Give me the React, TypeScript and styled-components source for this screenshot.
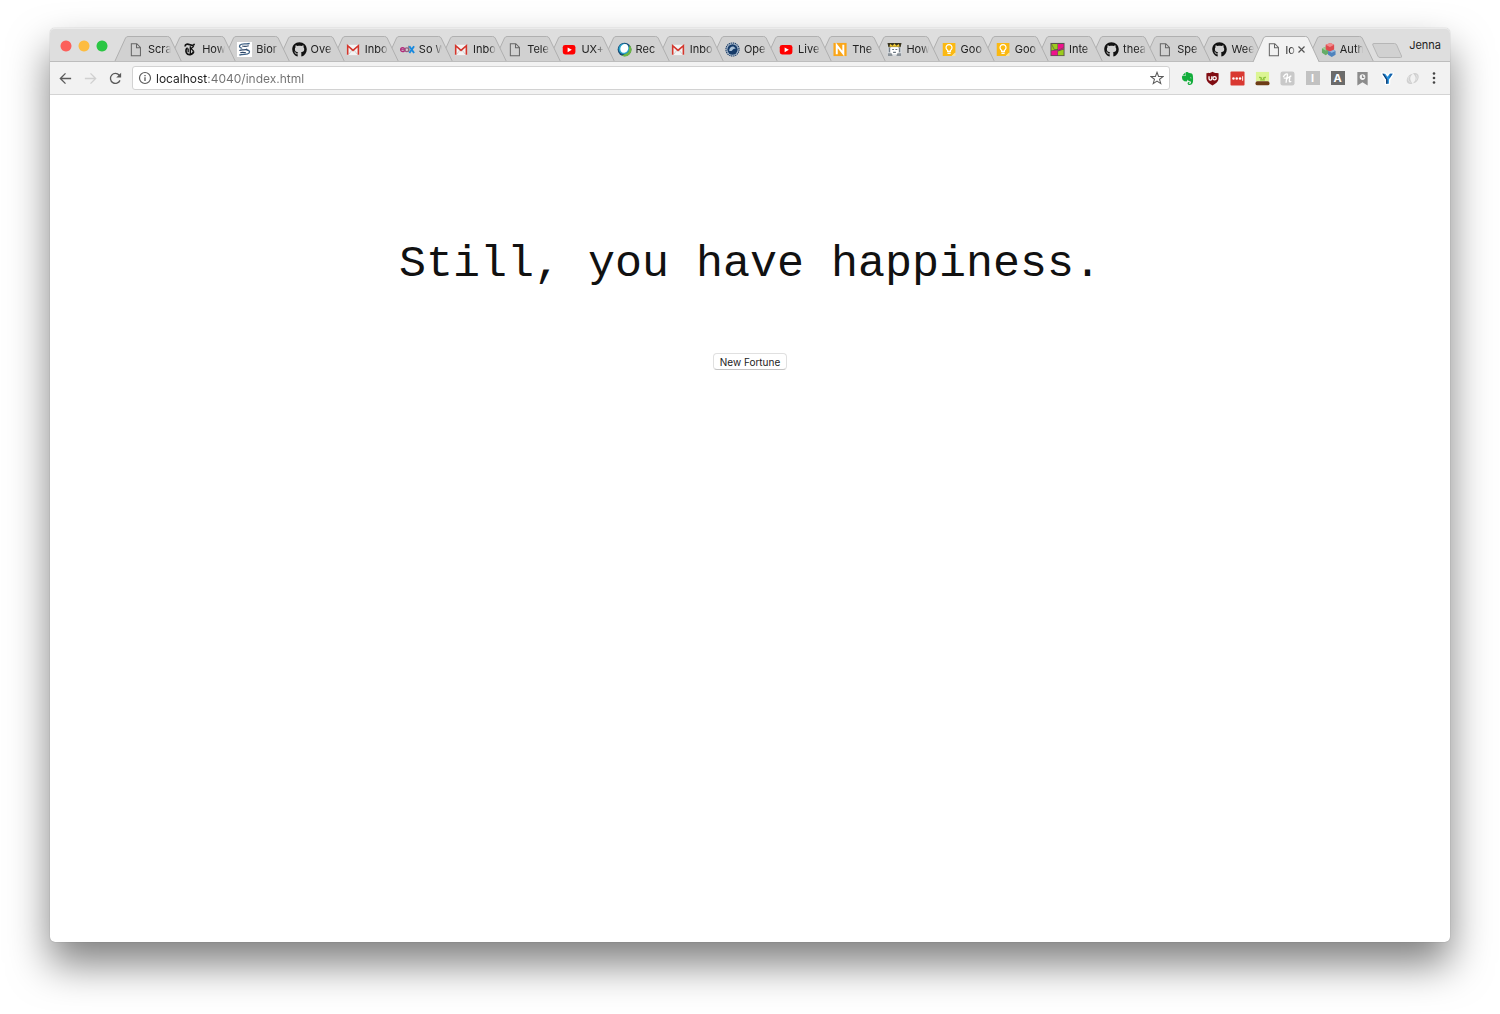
import React, { useState } from "react";
import styled, { createGlobalStyle } from "styled-components";
import { FaEvernote, FaGithub } from "react-icons/fa";

const GlobalStyle = createGlobalStyle`
  *, *::before, *::after { box-sizing: border-box; }
  body {
    margin: 0;
    background: #fff;
    font-family: Inter, "Liberation Sans", sans-serif;
    color: #222;
  }
  button { font: inherit; color: inherit; }
`;

const Desktop = styled.div`
  display: flex;
  min-height: 100vh;
  padding: 28px 50px 72px;
  overflow: hidden;
`;

const Window = styled.div`
  flex: 1;
  min-width: 0;
  display: flex;
  flex-direction: column;
  background: #fff;
  border-radius: 5px;
  box-shadow: 0 0 1px rgba(0, 0, 0, 0.4), 0 22px 40px rgba(0, 0, 0, 0.5);
`;

const TabStrip = styled.header`
  display: flex;
  height: 34px;
  padding-left: 10px;
  background: #dedede;
  border-top: 1px solid #ebebeb;
  border-bottom: 1px solid #bdbdbd;
  border-radius: 5px 5px 0 0;
`;

const Lights = styled.div`
  display: flex;
  gap: 6px;
  padding-top: 11px;
  margin-right: 7px;
`;

const Light = styled.button<{ $fill: string }>`
  width: 12px;
  height: 12px;
  padding: 0;
  border: 0;
  border-radius: 50%;
  background: radial-gradient(circle, ${(p) => p.$fill} 5px, transparent 6px);
`;

const Tabs = styled.nav`
  flex: 1;
  min-width: 0;
  display: flex;
  align-items: flex-end;
  padding-right: 12px;
  isolation: isolate;
`;

const TabButton = styled.button<{ $level: number; $active: boolean }>`
  flex: 1 1 0;
  min-width: 0;
  height: ${(p) => (p.$active ? 26 : 25)}px;
  margin: 0 -12px ${(p) => (p.$active ? -1 : 0)}px 0;
  padding: 1px 0 0;
  border: 0;
  background: none;
  position: relative;
  z-index: ${(p) => p.$level};
  text-align: left;
`;

const TabShape = styled.svg<{ $active: boolean }>`
  position: absolute;
  inset: 0;
  width: 100%;
  height: 100%;
  overflow: visible;
  fill: ${(p) => (p.$active ? "#f2f2f2" : "#d1d1d1")};
  stroke: #b0b0b0;
`;

const TabContent = styled.span<{ $active: boolean }>`
  position: relative;
  display: flex;
  align-items: center;
  gap: 4px;
  padding: 0 ${(p) => (p.$active ? 12 : 8)}px 0 14px;
`;

const TabTitle = styled.span<{ $active: boolean }>`
  flex: 1;
  min-width: 0;
  overflow: hidden;
  white-space: nowrap;
  font-size: 11px;
  line-height: 16px;
  mask-image: ${(p) =>
    p.$active
      ? "linear-gradient(to right, #000 4px, transparent 11px)"
      : "linear-gradient(to right, #000 16px, transparent 23px)"};
`;

const TabClose = styled.svg`
  flex: none;
  width: 11px;
  height: 11px;
  margin-left: -4px;
  fill: none;
  stroke: #555;
  stroke-width: 1.2;
`;

const NewTab = styled.button`
  width: 30px;
  height: 15px;
  margin-top: 14px;
  margin-left: -1px;
  padding: 0;
  border: 0;
  background: none;
`;

const Profile = styled.button`
  align-self: flex-start;
  margin-top: 7px;
  padding: 0 9px 0 7px;
  border: 0;
  background: none;
  font-size: 11px;
  line-height: 18px;
`;

const Glyph = styled.svg<{ $size?: number }>`
  flex: none;
  display: block;
  width: ${(p) => p.$size ?? 15}px;
  height: ${(p) => p.$size ?? 15}px;
`;

const Toolbar = styled.div`
  display: flex;
  align-items: center;
  height: 33px;
  padding: 0 7px 0 3px;
  background: #f2f2f2;
  border-bottom: 1px solid #d4d4d4;
`;

const ToolButton = styled.button<{ $width?: number }>`
  flex: none;
  display: flex;
  align-items: center;
  justify-content: center;
  width: ${(p) => p.$width ?? 25}px;
  height: 24px;
  padding: 0;
  border: 0;
  background: none;
`;

const AddressBox = styled.form`
  flex: 1;
  min-width: 0;
  display: flex;
  align-items: center;
  height: 24px;
  margin: 0 5px 0 4px;
  padding-left: 5px;
  background: #fff;
  border: 1px solid #d2d2d2;
  border-radius: 3px;
`;

const Address = styled.input`
  flex: 1;
  min-width: 0;
  height: 20px;
  margin-left: 4px;
  padding: 0;
  border: 0;
  outline: 0;
  font-family: Inter, "Liberation Sans", sans-serif;
  font-size: 12px;
  color: transparent;
  caret-color: #222;
  background: linear-gradient(to right, #1c1c1c 52px, #707070 52px);
  background-clip: text;
  -webkit-background-clip: text;
`;

const Square = styled.span<{ $bg: string }>`
  display: flex;
  align-items: center;
  justify-content: center;
  width: 14px;
  height: 14px;
  background: ${(p) => p.$bg};
  color: #fff;
  font-size: 11px;
  line-height: 14px;
  font-weight: 700;
`;

const Page = styled.main`
  flex: 1;
  display: flex;
  flex-direction: column;
  align-items: center;
  padding: 143px 24px 24px;
`;

const Fortune = styled.h1`
  margin: 0 0 61px;
  font-family: "Liberation Mono", "Courier New", monospace;
  font-size: 45px;
  line-height: 54px;
  font-weight: 400;
  color: #111;
  text-align: center;
`;

const FortuneButton = styled.button`
  height: 17px;
  padding: 0 6px;
  background: #fff;
  border: 1px solid #e0e0e0;
  border-bottom-color: #c4c4c4;
  border-radius: 4px;
  font-size: 10px;
  line-height: 14px;
`;

type Kind =
  | "file" | "times" | "bio" | "github" | "gmail" | "edx" | "youtube" | "ring"
  | "seal" | "letterN" | "king" | "keep" | "quad" | "cubes";

function Favicon({ kind }: { kind: Kind }) {
  if (kind === "github") {
    return <Glyph as={FaGithub} viewBox="0 0 496 512" color="#111" />;
  }
  return (
    <Glyph viewBox="0 0 16 16" aria-hidden="true">
      {kind === "file" && (
        <path d="M2.500 1.800h5.800l3.900 4v8.900H2.500zM8 2v4.100h4" fill="none" stroke="#666" strokeWidth="1.100" />
      )}
      {kind === "times" && (
        <g fill="none" stroke="#111">
          <path d="M2.500 4.800c-.5-3 2.500-2.800 5-1.800 2.500 1 4.500.5 4.500-1.200" strokeWidth="1.800" />
          <path d="M5 6.500c-2 .5-2.300 3-1.300 5 1.500 3 6.500 2.600 7.800-1.500" strokeWidth="1.800" />
          <path d="M7.800 4.500v9M5.500 7v4M11.500 4.500 8.500 7l3 3" strokeWidth="1.400" />
        </g>
      )}
      {kind === "bio" && (
        <>
          <path d="M0 0h16v16H0z" fill="#fff" />
          <path d="M13.500 1.500C10 3 5.500.500 3 3.500c-1 2 .5 3 2.500 3M10 8.500c2.500 0 4 1 3 3-2 3-6.500.5-10.500 2.500" fill="none" stroke="#3c5f83" strokeWidth="1.400" />
          <path d="M5.500 4.300c3 .7 5 .3 7-.3M2.500 9c3-1.500 6 .500 8.500-1.500M3.500 11.500c2-1 4-.5 6 0" fill="none" stroke="#2c4668" strokeWidth="1.300" />
        </>
      )}
      {kind === "gmail" && (
        <>
          <path d="M1 3h13v11H1z" fill="#f3f3f3" />
          <path d="m3 13 3.500-4.500M12 13 8.500 8.500" stroke="#ccc" />
          <path d="M1.800 13.500V4l5.700 5 5.700-5v9.500" fill="none" stroke="#d4362c" strokeWidth="1.700" />
        </>
      )}
      {kind === "edx" && (
        <g fill="none">
          <circle cx="2.800" cy="8.200" r="2.100" stroke="#b2297a" strokeWidth="1.400" />
          <path d="M1 8.200h4" stroke="#b2297a" />
          <circle cx="7.300" cy="8.200" r="2" stroke="#9b5c85" strokeWidth="1.400" />
          <path d="M9.400 4v6.500" stroke="#777" strokeWidth="1.200" />
          <path d="m10 4.500 5 7.200M15 4.500l-5 7.200" stroke="#1789df" strokeWidth="2" />
        </g>
      )}
      {kind === "youtube" && (
        <>
          <rect x=".8" y="3.200" width="13.500" height="10" rx="2.500" fill="#f00" />
          <path d="m6 5.800 4.500 2.500L6 10.800z" fill="#fff" />
        </>
      )}
      {kind === "ring" && (
        <>
          <circle cx="8" cy="8" r="7.300" fill="#174b76" />
          <path d="M13.500 3.200A7.300 7.300 0 0 1 5 14.700l7-4z" fill="#6cb544" />
          <circle cx="7.300" cy="7.300" r="5.600" fill="#2aa7cf" />
          <ellipse cx="7.800" cy="6.800" rx="4.100" ry="4.900" fill="#fff" transform="rotate(28 7.800 6.800)" />
        </>
      )}
      {kind === "seal" && (
        <>
          <circle cx="8" cy="8" r="7" fill="#b9c8d8" stroke="#183b66" strokeWidth="1.200" strokeDasharray="1.500 .7" />
          <circle cx="8" cy="8" r="5.500" fill="#163b69" />
          <path d="M4.500 9.500c0-3.500 2.500-5.500 5-4.500l2 2-2.500.5-2 2z" fill="#a9c0d6" />
        </>
      )}
      {kind === "letterN" && (
        <>
          <path d="M.5 1h14v14H.5z" fill="#faa619" />
          <path d="M4 13V3.500l7 9V3" fill="none" stroke="#fff" strokeWidth="2.100" />
        </>
      )}
      {kind === "king" && (
        <>
          <path d="M.5 1h15v14H.5z" fill="#d9dde1" />
          <path d="M.5 1h15l-1 4.500h-13z" fill="#3a3520" />
          <path d="m2.500 5 1-3 2.500 2 2-2.500L10 4l2.500-2 1 3z" fill="#f0ca38" />
          <path d="M4 5.500h8V13H4z" fill="#fff" />
          <path d="M2.500 6v5M13.500 6v5M5.500 8h2M9 8h2M6.500 11h3" stroke="#6b7682" strokeWidth="1.200" />
          <path d="M1 12h4l1 3H1zM11 12h4v3h-5z" fill="#8a9299" />
        </>
      )}
      {kind === "keep" && (
        <>
          <path d="M.8 1h13.500v10l-4 4H.8z" fill="#fbb912" />
          <path d="M14.300 11v4h-4z" fill="#fde39c" />
          <path d="M6 10V8.800a3.200 3.200 0 1 1 3 0V10z" fill="none" stroke="#fff" strokeWidth="1.300" />
          <path d="M5.800 12h3.400" stroke="#fff" strokeWidth="1.500" />
        </>
      )}
      {kind === "quad" && (
        <>
          <path d="M.5 1h15v14H.5z" fill="#5a5250" />
          <path d="M1.500 2H8v5.500L1.500 9z" fill="#9ccb1d" />
          <path d="M8.500 2h6v5.500l-6 1.500z" fill="#ee118c" />
          <path d="M1.500 9.500 8 8.500V14H1.500z" fill="#ee118c" />
          <path d="m8.500 10 6-2v6h-6z" fill="#9ccb1d" />
          <path d="m1.500 2 3 6 3.500.500M8.500 9l6-3" fill="none" stroke="#5a5250" strokeWidth=".7" />
        </>
      )}
      {kind === "cubes" && (
        <>
          <path d="m1 7 4-2 4 2v4.500l-4 2.500-4-2.500z" fill="#65ac67" />
          <path d="m1 7 4-2 4 2-4 2z" fill="#9bd29c" />
          <path d="m7.500 9.500 4-2 4 2v4l-4 2.500-4-2.500z" fill="#4f83bd" />
          <path d="m7.500 9.500 4-2 4 2-4 2z" fill="#91b8e0" />
          <path d="m5 3 5-2 4 2v5l-4.500 2L5 8z" fill="#de4b4f" />
          <path d="m5 3 5-2 4 2-4.500 2.200z" fill="#f28b8c" />
        </>
      )}
    </Glyph>
  );
}

const tabs: { title: string; kind: Kind }[] = [
  { title: "Scra", kind: "file" },
  { title: "How", kind: "times" },
  { title: "Bior", kind: "bio" },
  { title: "Ove", kind: "github" },
  { title: "Inbo", kind: "gmail" },
  { title: "So W", kind: "edx" },
  { title: "Inbo", kind: "gmail" },
  { title: "Tele", kind: "file" },
  { title: "UX+", kind: "youtube" },
  { title: "Rec", kind: "ring" },
  { title: "Inbo", kind: "gmail" },
  { title: "Ope", kind: "seal" },
  { title: "Live", kind: "youtube" },
  { title: "The", kind: "letterN" },
  { title: "How", kind: "king" },
  { title: "Goo", kind: "keep" },
  { title: "Goo", kind: "keep" },
  { title: "Inte", kind: "quad" },
  { title: "thea", kind: "github" },
  { title: "Spe", kind: "file" },
  { title: "Wee", kind: "github" },
  { title: "lo", kind: "file" },
  { title: "Auth", kind: "cubes" },
];

function Tab({ title, kind, active, level, onSelect }: {
  title: string; kind: Kind; active: boolean; level: number; onSelect: () => void;
}) {
  return (
    <TabButton type="button" $level={level} $active={active} aria-current={active ? "page" : undefined} onClick={onSelect}>
      <TabShape $active={active} viewBox="0 0 66 25" preserveAspectRatio="none" aria-hidden="true">
        <path
          d="M0 25 10.500 2Q11.400 .5 13 .5H52.500Q54.100 .5 55 2L66 25"
          vectorEffect="non-scaling-stroke"
        />
      </TabShape>
      <TabContent $active={active}>
        <Favicon kind={kind} />
        <TabTitle $active={active}>{title}</TabTitle>
        {active && (
          <TabClose viewBox="0 0 11 11" aria-hidden="true">
            <path d="m2.500 2.500 6 6m0-6-6 6" />
          </TabClose>
        )}
      </TabContent>
    </TabButton>
  );
}

function Extensions() {
  return (
    <>
      <ToolButton type="button" aria-label="Evernote">
        <Glyph as={FaEvernote} $size={15} color="#12ad3b" />
      </ToolButton>
      <ToolButton type="button" aria-label="uBlock">
        <Glyph viewBox="0 0 16 16">
          <path d="M8 .8c2 1.300 4 1.500 6.500 1.500v5.500c0 3.500-3 5.800-6.500 7.600-3.500-1.800-6.500-4.100-6.500-7.600V2.300C4 2.300 6 2.100 8 .8z" fill="#800c12" />
          <path d="M4.300 5.500v2.800a1.500 1.500 0 0 0 3 0V5.500" fill="none" stroke="#fff" strokeWidth="1.400" />
          <circle cx="10.200" cy="7.700" r="1.800" fill="none" stroke="#fff" strokeWidth="1.400" />
        </Glyph>
      </ToolButton>
      <ToolButton type="button" aria-label="Passwords">
        <Glyph viewBox="0 0 16 16">
          <rect x=".5" y=".5" width="15" height="15" rx="1" fill="#d93831" />
          <g fill="#fff">
            <circle cx="3.700" cy="8" r="1.300" />
            <circle cx="7.200" cy="8" r="1.300" />
            <circle cx="10.700" cy="8" r="1.300" />
            <path d="M13 5.500h1v5h-1z" />
          </g>
        </Glyph>
      </ToolButton>
      <ToolButton type="button" aria-label="Sprout">
        <Glyph viewBox="0 0 16 16">
          <path d="M1 1h14v10H1z" fill="#dcf594" />
          <path d="m4.500 6.500 3 1.500M11.500 6.500l-3 1.500M5.500 9.500h5" fill="none" stroke="#8cc23a" strokeWidth="1.500" />
          <rect x=".5" y="11" width="15" height="4.200" rx="2" fill="#6d3c16" />
        </Glyph>
      </ToolButton>
      <ToolButton type="button" aria-label="Coupons">
        <Glyph viewBox="0 0 16 16">
          <rect x=".5" y=".5" width="15" height="15" rx="2.500" fill="#c9c9c9" />
          <path d="M3.500 6.500C5 3.500 8 2 8 4c0 2-1.500 4.500-1.500 8.500M7 9c1.500-3 4-2.500 3.300-.5s-.7 4 1.700 2.500M4 7.500c3 .3 6.500-.5 8-2.500" fill="none" stroke="#fff" strokeWidth="1.400" />
        </Glyph>
      </ToolButton>
      <ToolButton type="button"><Square $bg="#c2c2c2">I</Square></ToolButton>
      <ToolButton type="button"><Square $bg="#6b6b6b">A</Square></ToolButton>
      <ToolButton type="button" aria-label="Saved history">
        <Glyph viewBox="0 0 16 16">
          <path d="M2.500 1h11v14.500L8 12l-5.500 3.500z" fill="#8c8c8c" />
          <circle cx="8" cy="6.500" r="3" fill="#f4f4f4" />
          <path d="M8 4.500v2.300h1.800" fill="none" stroke="#8c8c8c" strokeWidth="1.200" />
        </Glyph>
      </ToolButton>
      <ToolButton type="button" aria-label="Funnel">
        <Glyph viewBox="0 0 16 16">
          <path d="M2.500 3h3L8 6l2.500-3h3L9.500 9.500v4h-3v-4z" fill="#fff" stroke="#fff" strokeWidth="3" strokeLinejoin="round" />
          <path d="M2.500 3h3L8 6l2.500-3h3L9.500 9v4.500h-3V9z" fill="#2390dc" />
          <path d="M2.500 3h1.500l3 4.500L8 9v4.500H6.500V9z" fill="#133c70" />
          <path d="M10.500 3h3L10 8z" fill="#1460a8" />
        </Glyph>
      </ToolButton>
      <ToolButton type="button" aria-label="Sync">
        <Glyph viewBox="0 0 16 16">
          <path d="M8 13.500C2 15.500.5 10 3 6.500 4.500 4 7 3 8.500 3 5 5.500 4.500 9 8 13.500z" fill="#d0d0d0" />
          <path d="M8.500 2.500c5.500-2 7.500 3 5.200 7-1.500 2.500-3.500 3.500-5.200 3.500 3.500-3 4-6.500 0-10.500z" fill="#d0d0d0" />
          <path d="M4.500 5.500c-2 3-1 6 1.500 6.500M12 4c1.500 2 1 4.500-.5 6" fill="none" stroke="#e4e4e4" />
        </Glyph>
      </ToolButton>
    </>
  );
}

const fortunes = ["Still, you have happiness.", "Good news is on its way.", "A calm day lies ahead."];

export default function App() {
  const [selected, setSelected] = useState(21);
  const [fortune, setFortune] = useState(0);

  return (
    <>
      <GlobalStyle />
      <Desktop>
        <Window>
          <TabStrip>
            <Lights>
              <Light type="button" aria-label="Close window" $fill="#fc605b" />
              <Light type="button" aria-label="Minimize window" $fill="#fdbc40" />
              <Light type="button" aria-label="Zoom window" $fill="#2bc644" />
            </Lights>
            <Tabs aria-label="Tabs">
              {tabs.map((tab, i) => (
                <Tab
                  key={i}
                  {...tab}
                  active={i === selected}
                  level={i === selected ? tabs.length + 1 : tabs.length - i}
                  onSelect={() => setSelected(i)}
                />
              ))}
            </Tabs>
            <NewTab type="button" aria-label="New tab">
              <Glyph viewBox="0 0 30 15" $size={30} preserveAspectRatio="xMidYMin meet">
                <path d="M2 .5h20.500q1.500 0 2.200 1.500l4.800 11q.5 1.500-1 1.500H8q-1.500 0-2.200-1.500L.8 2Q.2.500 2 .5z" fill="#d1d1d1" stroke="#b6b6b6" />
              </Glyph>
            </NewTab>
            <Profile type="button">Jenna</Profile>
          </TabStrip>

          <Toolbar>
            <ToolButton type="button" aria-label="Back">
              <Glyph viewBox="0 0 16 16">
                <path d="M14 8H3M8 2.500 2.500 8 8 13.500" fill="none" stroke="#5a5a5a" strokeWidth="1.400" />
              </Glyph>
            </ToolButton>
            <ToolButton type="button" aria-label="Forward">
              <Glyph viewBox="0 0 16 16">
                <path d="M2 8h11M8 2.500 13.500 8 8 13.500" fill="none" stroke="#d0d0d0" strokeWidth="1.400" />
              </Glyph>
            </ToolButton>
            <ToolButton type="button" aria-label="Reload">
              <Glyph viewBox="0 0 16 16">
                <path d="M12.800 10A5.300 5.300 0 1 1 12 4.500" fill="none" stroke="#5a5a5a" strokeWidth="1.400" />
                <path d="M14 1.800V7H8.800z" fill="#5a5a5a" />
              </Glyph>
            </ToolButton>
            <AddressBox onSubmit={(e) => e.preventDefault()}>
              <Glyph viewBox="0 0 14 14" $size={14} aria-hidden="true">
                <circle cx="7" cy="7" r="5.500" fill="none" stroke="#5a5a5a" strokeWidth="1.200" />
                <path d="M7 6.200V10M7 4v1.300" stroke="#5a5a5a" strokeWidth="1.300" />
              </Glyph>
              <Address aria-label="Address" defaultValue="localhost:4040/index.html" spellCheck={false} />
              <ToolButton type="button" aria-label="Bookmark this page">
                <Glyph viewBox="0 0 16 16" $size={14}>
                  <path d="m8 1.500 1.800 4.700 5 .2-3.900 3.100 1.400 4.900L8 11.600l-4.300 2.800 1.400-4.900-3.900-3.100 5-.2z" fill="none" stroke="#5a5a5a" strokeWidth="1.200" />
                </Glyph>
              </ToolButton>
            </AddressBox>
            <Extensions />
            <ToolButton type="button" aria-label="Menu" $width={18}>
              <Glyph viewBox="0 0 14 14" $size={14} fill="#444">
                <circle cx="7" cy="2.500" r="1.300" />
                <circle cx="7" cy="7" r="1.300" />
                <circle cx="7" cy="11.500" r="1.300" />
              </Glyph>
            </ToolButton>
          </Toolbar>

          <Page>
            <Fortune>{fortunes[fortune]}</Fortune>
            <FortuneButton type="button" onClick={() => setFortune((fortune + 1) % fortunes.length)}>
              New Fortune
            </FortuneButton>
          </Page>
        </Window>
      </Desktop>
    </>
  );
}
